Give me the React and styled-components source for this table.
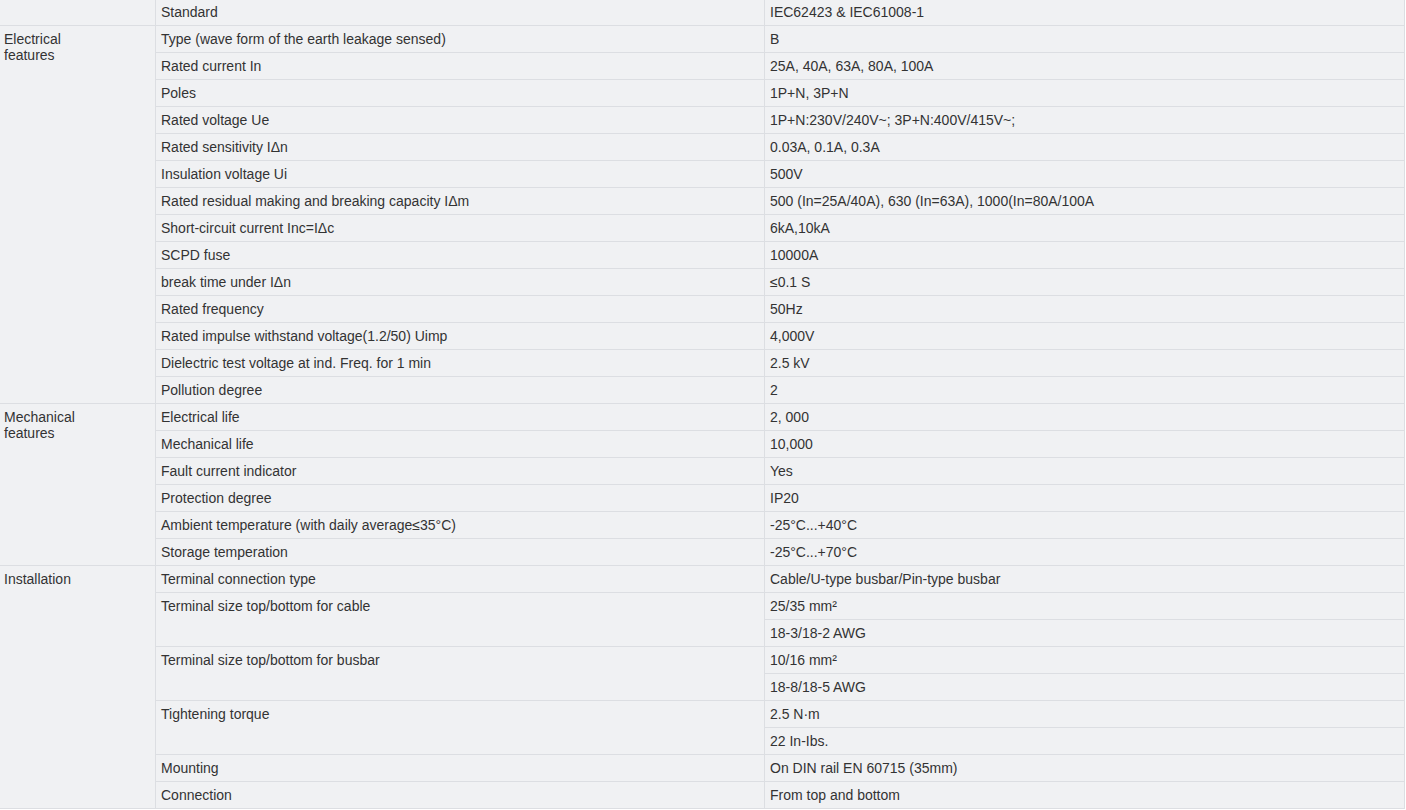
import React from "react";
import styled, { createGlobalStyle } from "styled-components";

const Global = createGlobalStyle`
  html, body { margin: 0; padding: 0; background: #ffffff; }
  body { font-family: Arial, "Liberation Sans", sans-serif; overflow: hidden; }
`;

const Page = styled.div`
  width: 1406px;
  height: 810px;
  overflow: hidden;
  background: #ffffff;
`;

const Table = styled.table`
  border-collapse: collapse;
  table-layout: fixed;
  width: 1407px;
  margin: -2px 0 0 -2px;
  background: #f0f1f3;
  font-family: "Liberation Sans", Arial, sans-serif;
  font-size: 14px;
  line-height: 16px;
  color: #333333;
`;

const Cell = styled.td`
  border: 1px solid #dcdee2;
  padding: 5px 5px;
  height: 16px;
  vertical-align: top;
  text-align: left;
  white-space: nowrap;
`;

const GroupCell = styled(Cell)`
  white-space: normal;
`;

const GroupName = styled.div`
  max-width: 92px;
`;

const groups = [
  {
    name: "",
    rows: [{ label: "Standard", values: ["IEC62423 & IEC61008-1"] }],
  },
  {
    name: "Electrical features",
    rows: [
      { label: "Type (wave form of the earth leakage sensed)", values: ["B"] },
      { label: "Rated current In", values: ["25A, 40A, 63A, 80A, 100A"] },
      { label: "Poles", values: ["1P+N, 3P+N"] },
      { label: "Rated voltage Ue", values: ["1P+N:230V/240V~; 3P+N:400V/415V~;"] },
      { label: "Rated sensitivity IΔn", values: ["0.03A, 0.1A, 0.3A"] },
      { label: "Insulation voltage Ui", values: ["500V"] },
      {
        label: "Rated residual making and breaking capacity IΔm",
        values: ["500 (In=25A/40A), 630 (In=63A), 1000(In=80A/100A"],
      },
      { label: "Short-circuit current Inc=IΔc", values: ["6kA,10kA"] },
      { label: "SCPD fuse", values: ["10000A"] },
      { label: "break time under IΔn", values: ["≤0.1 S"] },
      { label: "Rated frequency", values: ["50Hz"] },
      { label: "Rated impulse withstand voltage(1.2/50) Uimp", values: ["4,000V"] },
      { label: "Dielectric test voltage at ind. Freq. for 1 min", values: ["2.5 kV"] },
      { label: "Pollution degree", values: ["2"] },
    ],
  },
  {
    name: "Mechanical features",
    rows: [
      { label: "Electrical life", values: ["2, 000"] },
      { label: "Mechanical life", values: ["10,000"] },
      { label: "Fault current indicator", values: ["Yes"] },
      { label: "Protection degree", values: ["IP20"] },
      { label: "Ambient temperature (with daily average≤35°C)", values: ["-25°C...+40°C"] },
      { label: "Storage temperation", values: ["-25°C...+70°C"] },
    ],
  },
  {
    name: "Installation",
    rows: [
      { label: "Terminal connection type", values: ["Cable/U-type busbar/Pin-type busbar"] },
      { label: "Terminal size top/bottom for cable", values: ["25/35 mm²", "18-3/18-2 AWG"] },
      { label: "Terminal size top/bottom for busbar", values: ["10/16 mm²", "18-8/18-5 AWG"] },
      { label: "Tightening torque", values: ["2.5 N·m", "22 In-Ibs."] },
      { label: "Mounting", values: ["On DIN rail EN 60715 (35mm)"] },
      { label: "Connection", values: ["From top and bottom"] },
    ],
  },
];

function buildRows() {
  const out = [];
  groups.forEach((g, gi) => {
    const span = g.rows.reduce((s, r) => s + r.values.length, 0);
    g.rows.forEach((r, ri) => {
      r.values.forEach((v, vi) => {
        out.push(
          <tr key={`${gi}-${ri}-${vi}`}>
            {ri === 0 && vi === 0 && (
              <GroupCell rowSpan={span}>
                <GroupName>{g.name}</GroupName>
              </GroupCell>
            )}
            {vi === 0 && <Cell rowSpan={r.values.length}>{r.label}</Cell>}
            <Cell>{v}</Cell>
          </tr>
        );
      });
    });
  });
  return out;
}

export default function App() {
  return (
    <Page>
      <Global />
      <Table>
        <colgroup>
          <col style={{ width: 157 }} />
          <col style={{ width: 609 }} />
          <col />
        </colgroup>
        <tbody>{buildRows()}</tbody>
      </Table>
    </Page>
  );
}
